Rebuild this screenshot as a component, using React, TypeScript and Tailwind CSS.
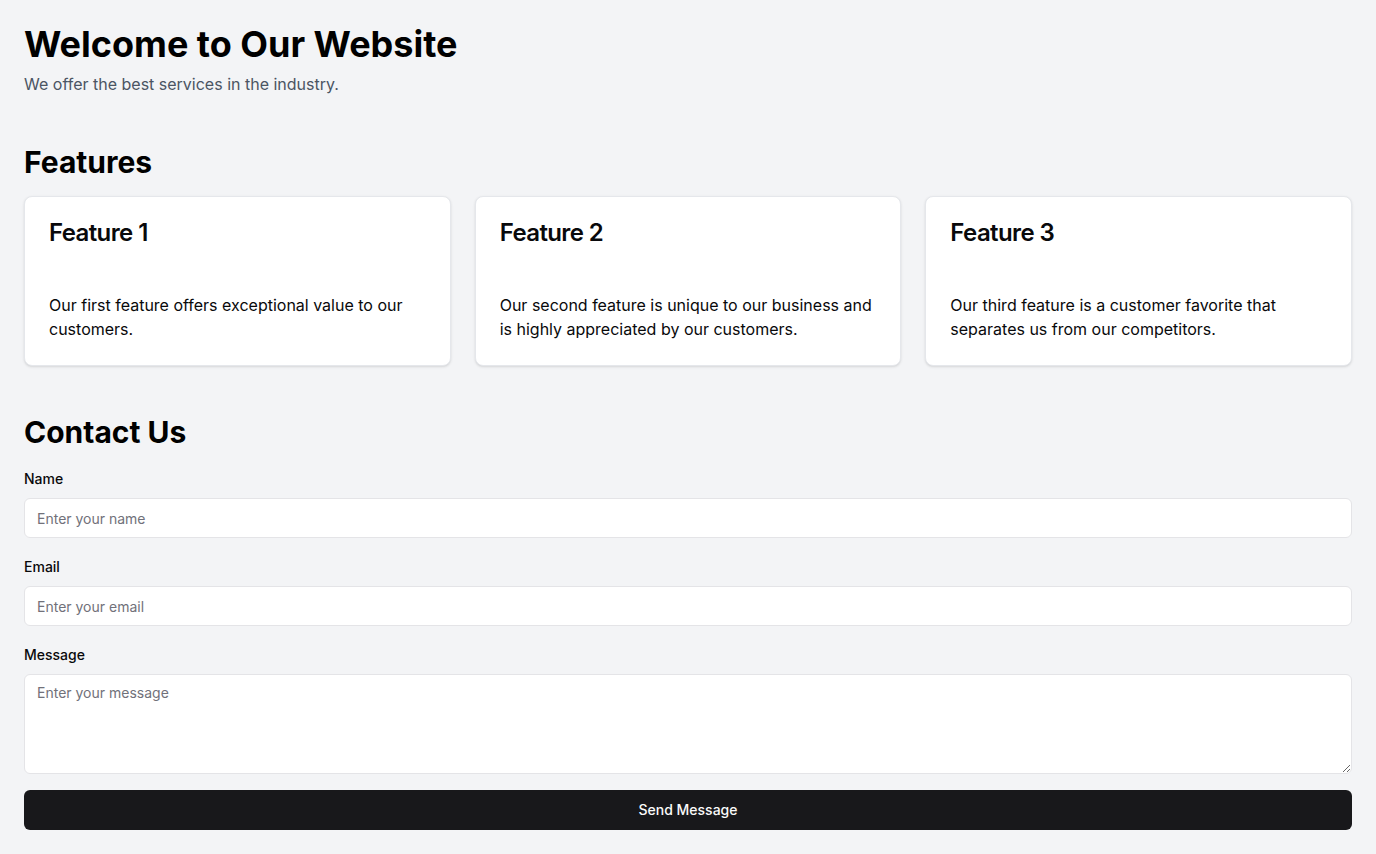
import React from "react";

const features = [
  { title: "Feature 1", desc: "Our first feature offers exceptional value to our customers." },
  { title: "Feature 2", desc: "Our second feature is unique to our business and is highly appreciated by our customers." },
  { title: "Feature 3", desc: "Our third feature is a customer favorite that separates us from our competitors." },
];

export default function App() {
  return (
    <div
      className="min-h-screen bg-[#f3f4f6] p-6 text-black"
      style={{ fontFamily: "Inter, 'Noto Sans', sans-serif" }}
    >
      <header className="mb-12">
        <h1 className="text-4xl font-bold text-black">Welcome to Our Website</h1>
        <p className="mt-2 text-base text-[#4b5563]">We offer the best services in the industry.</p>
      </header>

      <section className="mb-12">
        <h2 className="mb-4 text-3xl font-bold text-black">Features</h2>
        <div className="grid grid-cols-3 gap-6">
          {features.map((f) => (
            <div
              key={f.title}
              className="rounded-lg border border-[#e5e7eb] bg-white shadow-sm"
            >
              <div className="p-6">
                <h3 className="text-2xl font-semibold leading-none tracking-tight text-[#09090b]">
                  {f.title}
                </h3>
              </div>
              <div className="p-6">
                <p className="text-base text-[#09090b]">{f.desc}</p>
              </div>
            </div>
          ))}
        </div>
      </section>

      <section>
        <h2 className="mb-4 text-3xl font-bold text-black">Contact Us</h2>
        <form className="space-y-4" onSubmit={(e) => e.preventDefault()}>
          <div className="space-y-2">
            <div>
              <label className="text-sm font-medium text-[#09090b]">Name</label>
            </div>
            <input
              type="text"
              placeholder="Enter your name"
              className="block h-10 w-full rounded-md border border-[#e4e4e7] bg-white px-3 text-sm text-[#09090b] placeholder:text-[#71717a] outline-none"
            />
          </div>
          <div className="space-y-2">
            <div>
              <label className="text-sm font-medium text-[#09090b]">Email</label>
            </div>
            <input
              type="email"
              placeholder="Enter your email"
              className="block h-10 w-full rounded-md border border-[#e4e4e7] bg-white px-3 text-sm text-[#09090b] placeholder:text-[#71717a] outline-none"
            />
          </div>
          <div className="space-y-2">
            <div>
              <label className="text-sm font-medium text-[#09090b]">Message</label>
            </div>
            <textarea
              placeholder="Enter your message"
              className="block h-[100px] w-full rounded-md border border-[#e4e4e7] bg-white px-3 py-2 text-sm text-[#09090b] placeholder:text-[#71717a] outline-none"
            />
          </div>
          <button
            type="submit"
            className="flex h-10 w-full items-center justify-center rounded-md bg-[#18181b] text-sm font-medium text-[#fafafa]"
          >
            Send Message
          </button>
        </form>
      </section>
    </div>
  );
}
